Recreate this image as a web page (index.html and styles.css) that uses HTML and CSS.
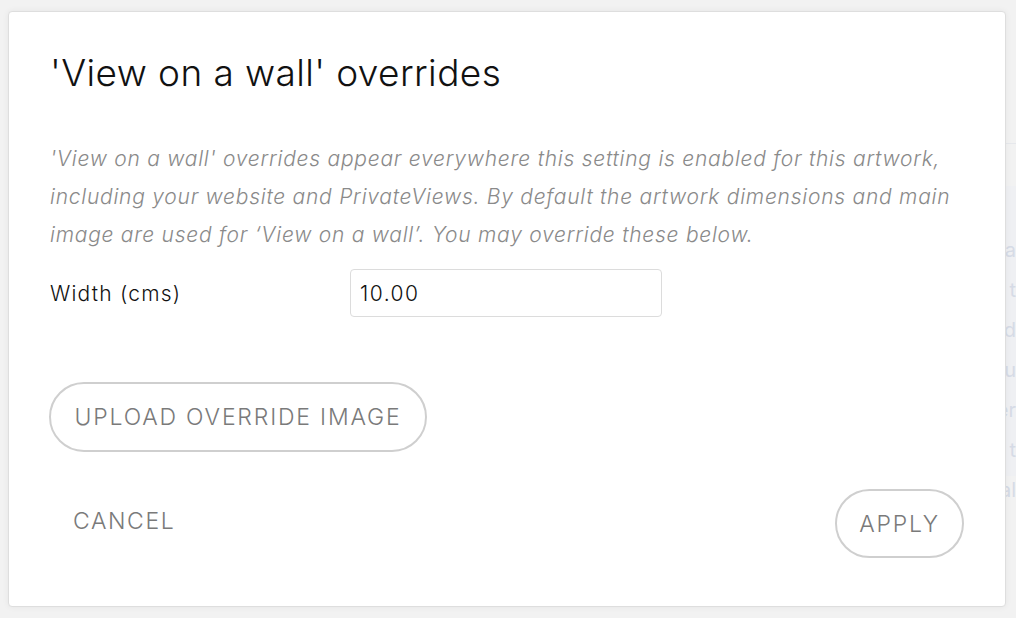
FILE: index.html
```html
<!DOCTYPE html>
<html>
<head>
<meta charset="utf-8">
<link rel="stylesheet" href="styles.css">
</head>
<body>
<div class="backdrop">
  <div class="bg-panel">
    <div class="bg-rule"></div>
    <div class="bg-card">
      <span>a</span><span>t</span><span>d</span><span>tu</span><span>er</span><span>t</span><span>al</span>
    </div>
  </div>
  <div class="modal">
    <h1 class="title">'View on a wall' overrides</h1>
    <p class="desc">'View on a wall' overrides appear everywhere this setting is enabled for this artwork, including your website and PrivateViews. By default the artwork dimensions and main image are used for ‘View on a wall’. You may override these below.</p>
    <div class="field">
      <label class="label" for="w">Width (cms)</label>
      <input class="input" id="w" type="text" value="10.00">
    </div>
    <div class="upload-row">
      <button class="pill upload">UPLOAD OVERRIDE IMAGE</button>
    </div>
    <div class="actions">
      <button class="link">CANCEL</button>
      <button class="pill apply">APPLY</button>
    </div>
  </div>
</div>
</body>
</html>
```

FILE: styles.css
```css
* { box-sizing: border-box; }
html, body { margin: 0; padding: 0; }
body {
  background: #f2f2f2;
  font-family: "Inter", "Liberation Sans", sans-serif;
  width: 1016px;
  height: 618px;
  overflow: hidden;
}
.backdrop {
  position: relative;
  width: 1016px;
  height: 618px;
  padding: 11px 0 0 8px;
}
.bg-panel {
  position: absolute;
  left: 940px;
  top: 0;
  width: 76px;
  height: 618px;
}
.bg-rule {
  position: absolute;
  left: 0; right: 0;
  top: 143px;
  height: 1px;
  background: #e6e8ec;
}
.bg-card {
  position: absolute;
  left: 0; right: 0;
  top: 186px;
  height: 290px;
  background: #eff0f3;
  display: flex;
  flex-direction: column;
  align-items: flex-end;
  padding-top: 48px;
  gap: 8px;
  color: #d6dbe6;
  font-size: 20px;
  line-height: 32px;
}
.modal {
  position: relative;
  width: 998px;
  height: 596px;
  background: #fff;
  border: 1px solid #dedede;
  border-radius: 4px;
  box-shadow: 0 0 6px rgba(0,0,0,0.06);
  padding: 0 41px;
  display: flex;
  flex-direction: column;
}
.title {
  margin: 39px 0 0;
  font-weight: 300;
  font-size: 37px;
  line-height: 44px;
  letter-spacing: 0.4px;
  color: #111;
}
.desc {
  margin: 45px 0 0;
  font-style: italic;
  font-weight: 300;
  font-size: 21px;
  line-height: 38px;
  letter-spacing: 0.75px;
  color: #8a8a8a;
}
.field {
  display: flex;
  align-items: center;
  margin-top: 15px;
}
.label {
  width: 300px;
  font-size: 21px;
  font-weight: 300;
  letter-spacing: 1.2px;
  color: #111;
}
.input {
  width: 312px;
  height: 48px;
  border: 1px solid #dcdcdc;
  border-radius: 4px;
  padding: 0 9px;
  font-family: inherit;
  font-weight: 300;
  font-size: 21px;
  letter-spacing: 1.5px;
  color: #111;
  outline: none;
}
.upload-row {
  margin-top: 65px;
  display: flex;
}
.pill {
  background: #fff;
  border: 2px solid #cfcfcf;
  border-radius: 40px;
  font-family: inherit;
  font-weight: 300;
  font-size: 23px;
  letter-spacing: 1.8px;
  color: #7a7a7a;
  padding: 0;
  cursor: pointer;
}
.upload {
  width: 378px;
  height: 70px;
  margin-left: -1px;
}
.actions {
  margin-top: 37px;
  display: flex;
  justify-content: space-between;
  align-items: flex-start;
}
.link {
  background: none;
  border: none;
  font-family: inherit;
  font-weight: 300;
  font-size: 23px;
  line-height: 24px;
  letter-spacing: 1.6px;
  color: #7a7a7a;
  padding: 0 0 0 23px;
  margin-top: 20px;
  cursor: pointer;
}
.apply {
  width: 129px;
  height: 69px;
  margin-right: 0;
}
```
